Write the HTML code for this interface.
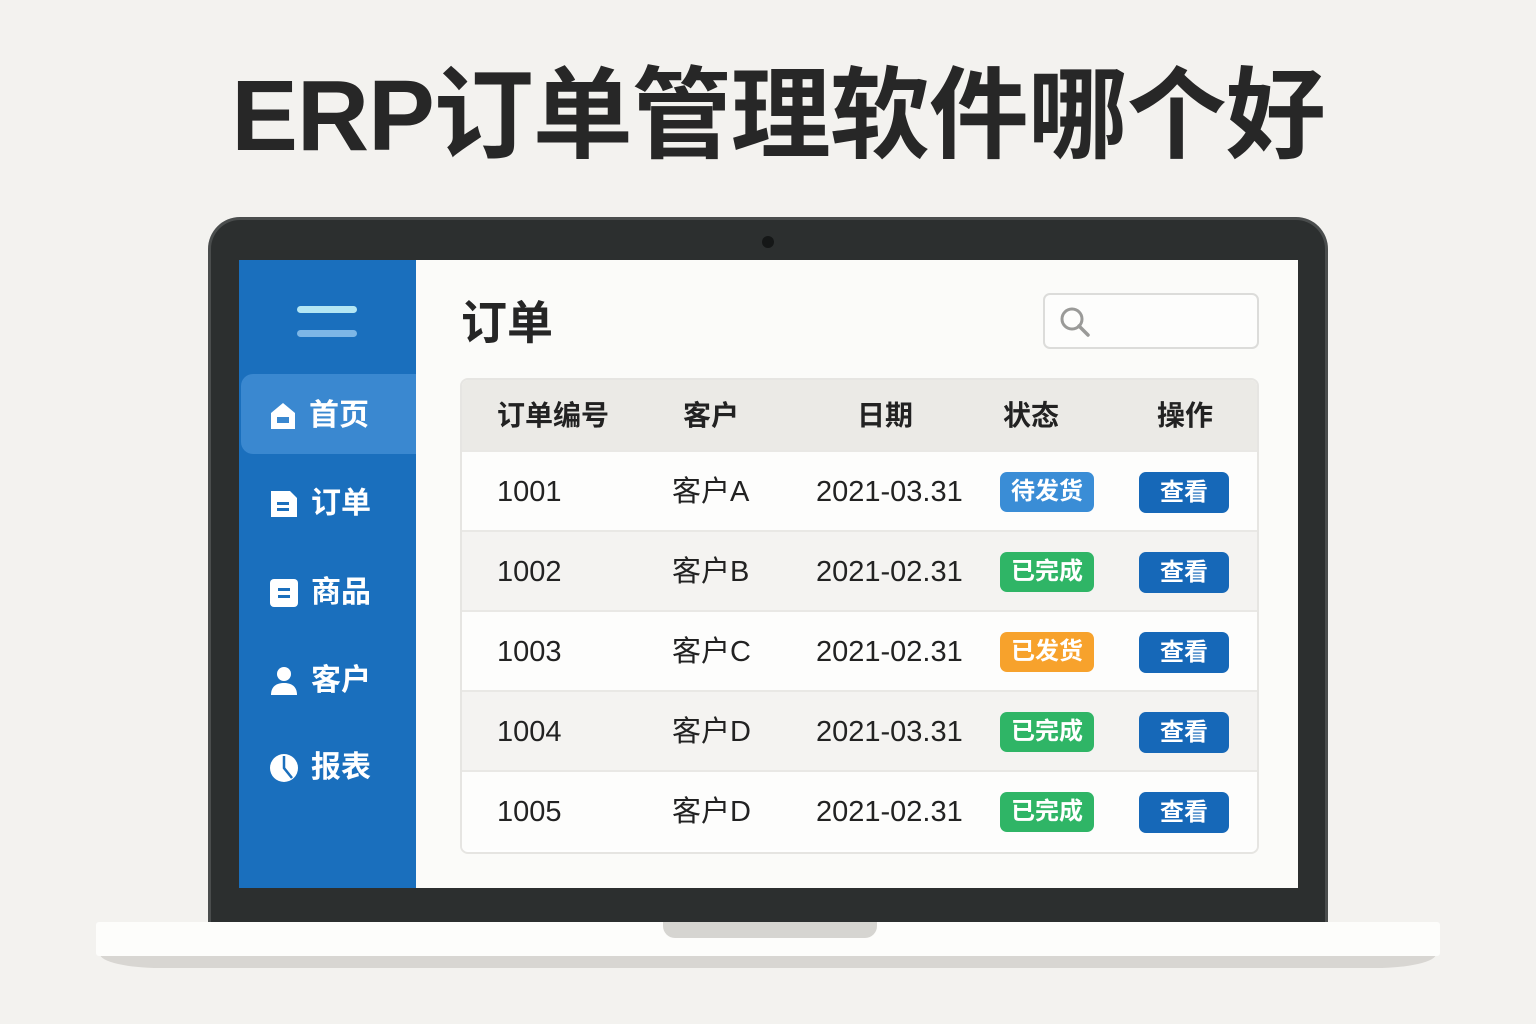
<!DOCTYPE html>
<html><head><meta charset="utf-8"><style>
*{margin:0;padding:0;box-sizing:border-box}
body{width:1536px;height:1024px;background:#f3f2ef;position:relative;overflow:hidden;font-family:"Liberation Sans","Noto Sans CJK SC",sans-serif;color:#222}
.abs{position:absolute}
.title{left:10px;width:1536px;top:54px;text-align:center;font-size:100px;font-weight:bold;color:#272727;line-height:124px;letter-spacing:-1px}
.bezel{left:208px;top:217px;width:1120px;height:720px;background:#2c2f2f;border-radius:32px 32px 0 0;border:3px solid #4a4d4d;border-bottom:none}
.cam{left:762px;top:236px;width:12px;height:12px;border-radius:50%;background:#151717}
.screen{left:239px;top:260px;width:1059px;height:628px;background:#fbfbf9;overflow:hidden}
.side{left:0;top:0;width:177px;height:628px;background:#1a6fbd}
.bar{left:58px;width:60px;height:7px;border-radius:4px}
.nav{left:30px;height:40px;color:#fff;font-size:30px;font-weight:bold;line-height:40px;display:flex;align-items:center}
.nav svg{margin-right:12px}
.active{left:2px;top:114px;width:175px;height:80px;background:#3a88d0;border-radius:12px 0 0 12px}
.h1{left:222px;top:38px;font-size:46px;font-weight:bold;color:#262626;line-height:50px}
.search{left:804px;top:33px;width:216px;height:56px;border:2px solid #dcdcda;border-radius:7px;background:#fdfdfc}
.table{left:221px;top:118px;width:799px;height:476px;background:#fff;border-radius:8px;overflow:hidden;border:2px solid #e6e5e2}
.row{position:absolute;left:0;width:799px;height:80px;font-size:29px;line-height:80px;color:#222;border-top:2px solid #e9e8e5}
.hdr{top:0;height:72px;line-height:72px;background:#ebeae6;font-weight:bold;font-size:28px;border:none}
.c{position:absolute;top:0}
.badge{position:absolute;top:20px;left:538px;width:94px;height:40px;border-radius:7px;color:#fff;font-size:24px;line-height:40px;text-align:center;font-weight:bold}
.btn{position:absolute;top:20px;left:677px;width:90px;height:41px;border-radius:7px;background:#1668b8;color:#fff;font-size:24px;line-height:41px;text-align:center;font-weight:bold}
.base{left:96px;top:922px;width:1344px;height:34px;background:#fdfdfb;border-radius:3px}
.shadow{left:100px;top:954px;width:1336px;height:14px;background:#d8d6d2;border-radius:0 0 60px 60px/0 0 14px 14px}
.notch{left:663px;top:922px;width:214px;height:16px;background:#d6d5d1;border-radius:0 0 12px 12px}
</style></head><body>
<div class="abs title">ERP订单管理软件哪个好</div>
<div class="abs bezel"></div>
<div class="abs cam"></div>
<div class="abs screen">
 <div class="abs side">
  <div class="abs bar" style="top:46px;background:#b3e6f4"></div>
  <div class="abs bar" style="top:70px;background:#7db6e6"></div>
  <div class="abs active"></div>
  <div class="abs nav" style="top:136px"><svg width="28" height="30" viewBox="0 0 28 30"><path d="M2 12 L14 2 L26 12 V28 H2 Z" fill="#fff"/><rect x="8" y="16" width="12" height="6" fill="#3a88d0"/></svg>首页</div>
  <div class="abs nav" style="top:224px"><svg width="30" height="30" viewBox="0 0 30 30"><path d="M2 2 H21 L28 9 V28 H2 Z" fill="#fff"/><rect x="8" y="13" width="12" height="3" fill="#1a6fbd"/><rect x="8" y="19" width="12" height="3" fill="#1a6fbd"/></svg>订单</div>
  <div class="abs nav" style="top:313px"><svg width="30" height="30" viewBox="0 0 30 30"><rect x="1" y="1" width="28" height="28" rx="4" fill="#fff"/><rect x="9" y="10" width="12" height="3" fill="#1a6fbd"/><rect x="9" y="17" width="12" height="3" fill="#1a6fbd"/></svg>商品</div>
  <div class="abs nav" style="top:401px"><svg width="30" height="30" viewBox="0 0 30 30"><circle cx="15" cy="8" r="7" fill="#fff"/><path d="M2 29 C2 20 8 17 15 17 C22 17 28 20 28 29 Z" fill="#fff"/></svg>客户</div>
  <div class="abs nav" style="top:488px"><svg width="30" height="30" viewBox="0 0 30 30"><circle cx="15" cy="15" r="14" fill="#fff"/><path d="M15 3 V15 L23 25" stroke="#1a6fbd" stroke-width="2.5" fill="none"/></svg>报表</div>
 </div>
 <div class="abs h1">订单</div>
 <div class="abs search"><svg class="abs" style="left:14px;top:11px" width="34" height="34" viewBox="0 0 34 34"><circle cx="13" cy="13" r="10" stroke="#9a9a98" stroke-width="3" fill="none"/><path d="M20 20 L29 29" stroke="#9a9a98" stroke-width="3.5" stroke-linecap="round"/></svg></div>
 <div class="abs table">
  <div class="row hdr"><span class="c" style="left:35px">订单编号</span><span class="c" style="left:221px">客户</span><span class="c" style="left:395px">日期</span><span class="c" style="left:541px">状态</span><span class="c" style="left:695px">操作</span></div>
  <div class="row" style="top:70px;background:#fdfdfc"><span class="c" style="left:35px">1001</span><span class="c" style="left:210px">客户A</span><span class="c" style="left:354px">2021-03.31</span><span class="badge" style="background:#3a8dd6">待发货</span><span class="btn">查看</span></div>
  <div class="row" style="top:150px;background:#f4f3f1"><span class="c" style="left:35px">1002</span><span class="c" style="left:210px">客户B</span><span class="c" style="left:354px">2021-02.31</span><span class="badge" style="background:#2fb566">已完成</span><span class="btn">查看</span></div>
  <div class="row" style="top:230px;background:#fdfdfc"><span class="c" style="left:35px">1003</span><span class="c" style="left:210px">客户C</span><span class="c" style="left:354px">2021-02.31</span><span class="badge" style="background:#f7a22c">已发货</span><span class="btn">查看</span></div>
  <div class="row" style="top:310px;background:#f4f3f1"><span class="c" style="left:35px">1004</span><span class="c" style="left:210px">客户D</span><span class="c" style="left:354px">2021-03.31</span><span class="badge" style="background:#2fb566">已完成</span><span class="btn">查看</span></div>
  <div class="row" style="top:390px;background:#fdfdfc"><span class="c" style="left:35px">1005</span><span class="c" style="left:210px">客户D</span><span class="c" style="left:354px">2021-02.31</span><span class="badge" style="background:#2fb566">已完成</span><span class="btn">查看</span></div>
 </div>
</div>
<div class="abs shadow"></div>
<div class="abs base"></div>
<div class="abs notch"></div>
</body></html>
